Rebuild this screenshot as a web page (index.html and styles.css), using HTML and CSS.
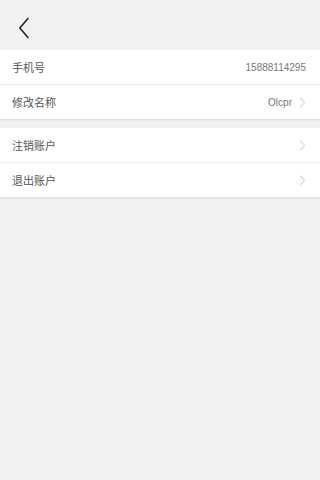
FILE: index.html
```html
<!DOCTYPE html>
<html lang="zh">
<head>
<meta charset="utf-8">
<meta name="viewport" content="width=device-width, initial-scale=1">
<link rel="stylesheet" href="styles.css">
</head>
<body>
<div class="page">
  <header class="topbar">
    <svg class="back" width="12" height="22" viewBox="0 0 12 22"><path d="M10 1.5 L1.8 11 L10 20.5" fill="none" stroke="#222" stroke-width="1.6" stroke-linecap="round" stroke-linejoin="round"/></svg>
  </header>
  <section class="group">
    <div class="row">
      <span class="label">手机号</span>
      <span class="value">15888114295</span>
    </div>
    <div class="row">
      <span class="label">修改名称</span>
      <span class="right"><span class="value">Olcpr</span><svg class="chev" width="7" height="11" viewBox="0 0 7 11"><path d="M1 0.8 L5.8 5.5 L1 10.2" fill="none" stroke="#bdbdbd" stroke-width="1"/></svg></span>
    </div>
  </section>
  <section class="group">
    <div class="row">
      <span class="label">注销账户</span>
      <svg class="chev" width="7" height="11" viewBox="0 0 7 11"><path d="M1 0.8 L5.8 5.5 L1 10.2" fill="none" stroke="#bdbdbd" stroke-width="1"/></svg>
    </div>
    <div class="row">
      <span class="label">退出账户</span>
      <svg class="chev" width="7" height="11" viewBox="0 0 7 11"><path d="M1 0.8 L5.8 5.5 L1 10.2" fill="none" stroke="#bdbdbd" stroke-width="1"/></svg>
    </div>
  </section>
</div>
</body>
</html>
```
FILE: styles.css
```css
html, body {
  margin: 0;
  padding: 0;
  background: #f1f1f1;
}
.page {
  width: 100%;
  min-height: 480px;
  background: #f1f1f1;
  font-family: "Liberation Sans", "Noto Sans CJK SC", sans-serif;
}
.topbar {
  height: 50px;
  display: flex;
  align-items: center;
  padding-left: 18px;
  box-sizing: border-box;
}
.back {
  display: block;
  margin-top: 6px;
}
.group {
  background: #fff;
  box-shadow: 0 1px 2px rgba(0,0,0,0.10);
  margin-bottom: 9px;
}
.row {
  height: 34px;
  display: flex;
  align-items: center;
  justify-content: space-between;
  padding: 0 14px 0 12px;
}
.row + .row {
  border-top: 1px solid #ececec;
}
.label {
  font-family: "Noto Sans CJK SC", sans-serif;
  font-size: 11px;
  color: #555;
}
.value {
  font-size: 10px;
  color: #777;
}
.right {
  display: flex;
  align-items: center;
  gap: 7px;
}
.chev {
  display: block;
}
```
